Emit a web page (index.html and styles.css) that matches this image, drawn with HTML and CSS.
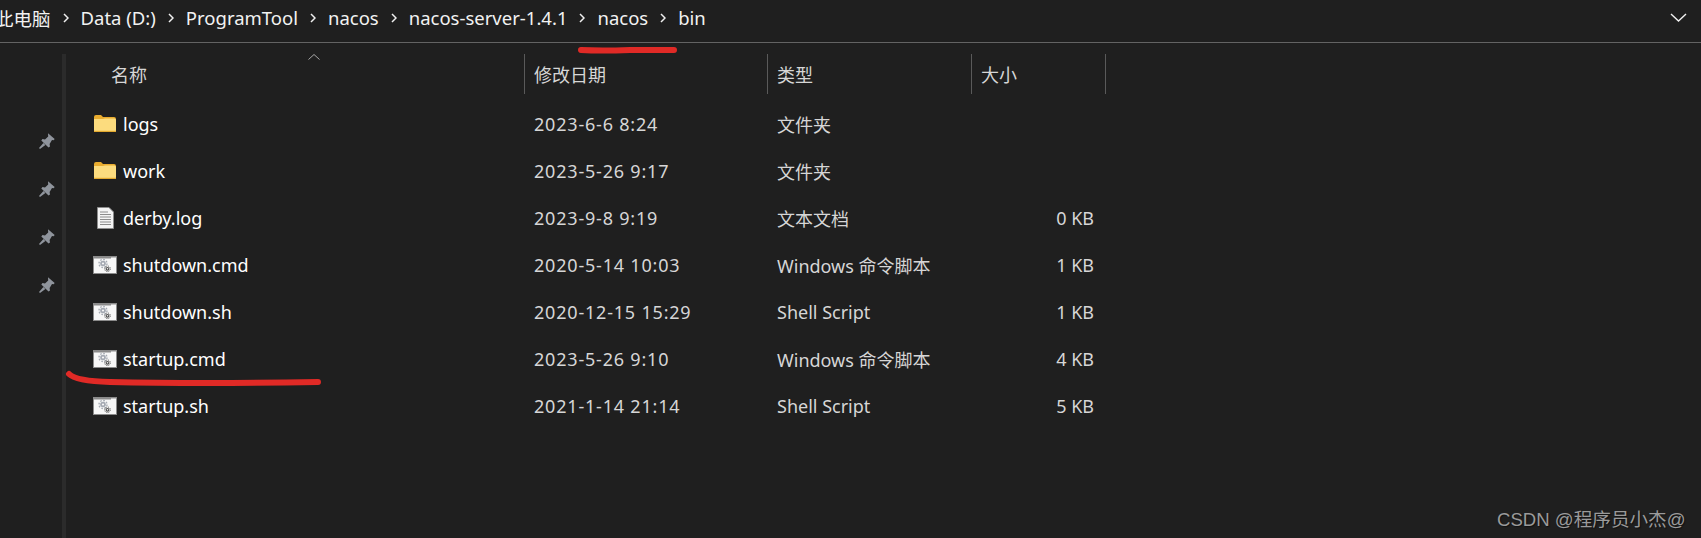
FILE: index.html
```html
<!DOCTYPE html>
<html lang="zh-CN">
<head>
    <meta charset="UTF-8">
    <title>bin</title>
    <link rel="stylesheet" href="styles.css">
</head>
<body>

<svg width="0" height="0" class="defs">
    <symbol id="folder" viewBox="0 0 22 17">
        <path d="M0 2 Q0 0 2 0 H7 L9 2 H20 Q22 2 22 4 V6 H0Z" fill="#e9ac2f"/>
        <path d="M0 4 H9 L11 3.5 H20.5 Q22 3.5 22 5 V15.5 Q22 17 20.5 17 H1.5 Q0 17 0 15.5Z" fill="#fcdc7e"/>
        <rect y="15.8" width="22" height="1.2" fill="#e3a92f"/>
    </symbol>
    <symbol id="doc" viewBox="0 0 17 22">
        <path d="M.5 .5 H12 L16.5 5 V21.5 H.5Z" fill="#f4f4f4" stroke="#8d8d8d"/>
        <path d="M3 5 H11 M3 7.5 H14 M3 10 H14 M3 12.5 H14 M3 15 H14 M3 17.5 H14" stroke="#8c8c8c"/>
    </symbol>
    <symbol id="script" viewBox="0 0 24 18">
        <rect x=".5" y=".5" width="23" height="17" fill="#f7f7f7" stroke="#8a8a8a"/>
        <rect x="1" y="1" width="17" height="1.5" fill="#8a8a8a"/>
        <path d="M18.5 1.5 H23" stroke="#8a8a8a" stroke-dasharray="1 1"/>
        <circle cx="10" cy="7.5" r="2.8" fill="#a4a9b2"/>
        <circle cx="10" cy="7.5" r="4" fill="none" stroke="#a4a9b2" stroke-width="1.4" stroke-dasharray="1.6 1.5"/>
        <circle cx="10" cy="7.5" r="1.1" fill="#f7f7f7"/>
        <circle cx="14.5" cy="12.8" r="1.9" fill="#4d4d4d"/>
        <circle cx="14.5" cy="12.8" r="2.8" fill="none" stroke="#4d4d4d" stroke-width="1" stroke-dasharray="1.1 1.1"/>
        <circle cx="14.5" cy="12.8" r=".8" fill="#f7f7f7"/>
    </symbol>
    <symbol id="pin" viewBox="0 0 16 16">
        <path d="M9 .3 L15.7 6 L14.6 7.2 L13 7 L10.6 11 L11 13.4 L9.5 14.6 L2.3 7.6 L3.5 6 L6 6.4 L9.2 3.4Z M4.4 10 L0 15 L1 16 L6.4 12Z" fill="#8f949c"/>
    </symbol>
</svg>

<!-- Barra de endereco -->
<div class="addressBar">
    <div class="crumbs">
        <span class="crumb crumbFirst">此电脑</span>
        <svg class="chevron" viewBox="0 0 6 10"><path d="M1 1 L5 5 L1 9"/></svg>
        <span class="crumb">Data (D:)</span>
        <svg class="chevron" viewBox="0 0 6 10"><path d="M1 1 L5 5 L1 9"/></svg>
        <span class="crumb">ProgramTool</span>
        <svg class="chevron" viewBox="0 0 6 10"><path d="M1 1 L5 5 L1 9"/></svg>
        <span class="crumb">nacos</span>
        <svg class="chevron" viewBox="0 0 6 10"><path d="M1 1 L5 5 L1 9"/></svg>
        <span class="crumb">nacos-server-1.4.1</span>
        <svg class="chevron" viewBox="0 0 6 10"><path d="M1 1 L5 5 L1 9"/></svg>
        <span class="crumb">nacos</span>
        <svg class="chevron" viewBox="0 0 6 10"><path d="M1 1 L5 5 L1 9"/></svg>
        <span class="crumb">bin</span>
    </div>
    <svg class="dropdown" viewBox="0 0 17 10"><path d="M1 1 L8.5 8 L16 1"/></svg>
</div>

<div class="main">
    <!-- Acesso rapido -->
    <div class="sidebar">
        <svg class="pin"><use href="#pin"/></svg>
        <svg class="pin"><use href="#pin"/></svg>
        <svg class="pin"><use href="#pin"/></svg>
        <svg class="pin"><use href="#pin"/></svg>
    </div>

    <!-- Lista de arquivos -->
    <div class="fileList">
        <div class="row header">
            <div class="cell nameHead">名称<svg class="sortArrow" viewBox="0 0 12 6"><path d="M.5 5.5 L6 .5 L11.5 5.5"/></svg></div>
            <div class="cell">修改日期</div>
            <div class="cell">类型</div>
            <div class="cell">大小</div>
        </div>

        <div class="row">
            <div class="cell name"><span class="iconBox"><svg class="icoFolder"><use href="#folder"/></svg></span>logs</div>
            <div class="cell date">2023-6-6 8:24</div>
            <div class="cell">文件夹</div>
            <div class="cell size"></div>
        </div>
        <div class="row">
            <div class="cell name"><span class="iconBox"><svg class="icoFolder"><use href="#folder"/></svg></span>work</div>
            <div class="cell date">2023-5-26 9:17</div>
            <div class="cell">文件夹</div>
            <div class="cell size"></div>
        </div>
        <div class="row">
            <div class="cell name"><span class="iconBox"><svg class="icoDoc"><use href="#doc"/></svg></span>derby.log</div>
            <div class="cell date">2023-9-8 9:19</div>
            <div class="cell">文本文档</div>
            <div class="cell size">0 KB</div>
        </div>
        <div class="row">
            <div class="cell name"><span class="iconBox"><svg class="icoScript"><use href="#script"/></svg></span>shutdown.cmd</div>
            <div class="cell date">2020-5-14 10:03</div>
            <div class="cell">Windows 命令脚本</div>
            <div class="cell size">1 KB</div>
        </div>
        <div class="row">
            <div class="cell name"><span class="iconBox"><svg class="icoScript"><use href="#script"/></svg></span>shutdown.sh</div>
            <div class="cell date">2020-12-15 15:29</div>
            <div class="cell">Shell Script</div>
            <div class="cell size">1 KB</div>
        </div>
        <div class="row">
            <div class="cell name"><span class="iconBox"><svg class="icoScript"><use href="#script"/></svg></span>startup.cmd</div>
            <div class="cell date">2023-5-26 9:10</div>
            <div class="cell">Windows 命令脚本</div>
            <div class="cell size">4 KB</div>
        </div>
        <div class="row">
            <div class="cell name"><span class="iconBox"><svg class="icoScript"><use href="#script"/></svg></span>startup.sh</div>
            <div class="cell date">2021-1-14 21:14</div>
            <div class="cell">Shell Script</div>
            <div class="cell size">5 KB</div>
        </div>
    </div>
</div>

<!-- Marcas em vermelho por cima da janela -->
<svg class="marks" viewBox="0 0 1701 538">
    <path d="M581 50 Q600 51 630 50 L674 50"/>
    <path d="M69 374 Q76 381 110 382 Q200 384 318 382"/>
</svg>

<div class="watermark">CSDN @程序员小杰@</div>

</body>
</html>
```

FILE: styles.css
```css
body {
    margin: 0;
    width: 1701px;
    height: 538px;
    overflow: hidden;
    position: relative;
    background-color: #1f1f1f;
    color: #f2f2f2;
    font-family: "Noto Sans", "Noto Sans CJK SC", sans-serif;
    font-size: 18px;
    display: flex;
    flex-direction: column;
}

.defs {
    position: absolute;
}

.addressBar {
    height: 35px;
    border-bottom: 1px solid #636363;
    display: flex;
    align-items: center;
    justify-content: space-between;
    padding-bottom: 7px;
    flex: none;
}

.crumbs {
    display: flex;
    align-items: center;
    gap: 12px;
    font-size: 18.5px;
}

.crumb {
    white-space: nowrap;
}

.crumbFirst {
    margin-left: -5px;
}

.chevron {
    width: 6px;
    height: 10px;
    fill: none;
    stroke: #f0f0f0;
    stroke-width: 1.5;
}

.dropdown {
    width: 17px;
    height: 10px;
    margin-right: 14px;
    fill: none;
    stroke: #f0f0f0;
    stroke-width: 1.4;
}

.main {
    flex: 1;
    display: flex;
}

.sidebar {
    width: 62px;
    flex: none;
    display: flex;
    flex-direction: column;
    align-items: center;
    gap: 32px;
    padding: 90px 0 0 32px;
    box-sizing: border-box;
}

.pin {
    width: 16px;
    height: 16px;
    flex: none;
}

.fileList {
    flex: 1;
    margin-top: 11px;
    border-left: 4px solid #2b2b2b;
}

.row {
    display: grid;
    grid-template-columns: 459px 243px 204px 134px;
    height: 47px;
    align-items: center;
}

.header {
    height: 40px;
    margin-bottom: 6px;
    color: #d6d6d6;
}

.header .cell {
    height: 40px;
    line-height: 42px;
    border-right: 1px solid #5a5a5a;
    box-sizing: border-box;
}

.cell {
    padding-left: 9px;
    color: #d6d6d6;
    white-space: nowrap;
}

.date {
    letter-spacing: .8px;
}

.nameHead {
    padding-left: 45px;
    position: relative;
}

.sortArrow {
    position: absolute;
    left: 242px;
    top: 0;
    width: 12px;
    height: 6px;
    fill: none;
    stroke: #a8a8a8;
}

.name {
    padding-left: 27px;
    color: #fff;
    display: flex;
    align-items: center;
}

.iconBox {
    width: 24px;
    height: 22px;
    margin-right: 6px;
    display: flex;
    align-items: center;
    justify-content: center;
}

.icoFolder {
    width: 22px;
    height: 17px;
}

.icoDoc {
    width: 17px;
    height: 22px;
}

.icoScript {
    width: 24px;
    height: 18px;
}

.size {
    text-align: right;
    padding-right: 12px;
}

.marks {
    position: absolute;
    left: 0;
    top: 0;
    width: 1701px;
    height: 538px;
    fill: none;
    stroke: #e02a26;
    stroke-width: 6;
    stroke-linecap: round;
}

.watermark {
    position: absolute;
    left: 1497px;
    top: 504px;
    font-family: "Liberation Sans", "Noto Sans CJK SC", sans-serif;
    font-size: 18.6px;
    color: #9a9a9a;
    text-shadow: 1px 1px 1px #111;
    white-space: nowrap;
}
```
